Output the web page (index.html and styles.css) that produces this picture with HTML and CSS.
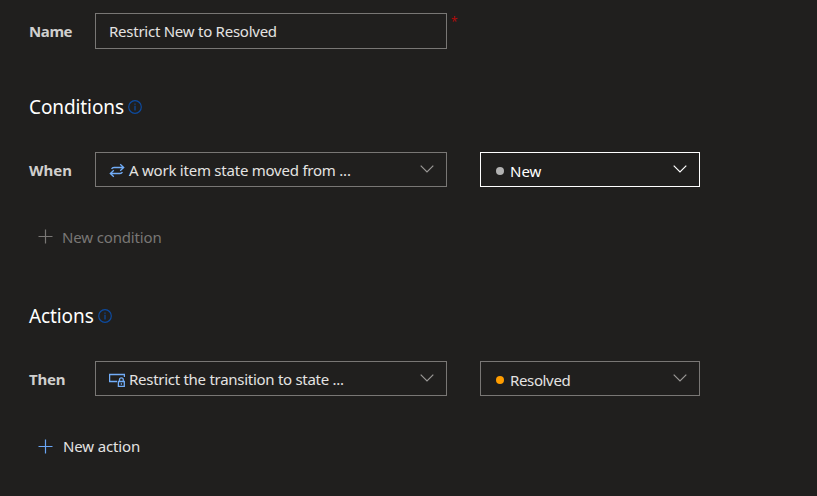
FILE: index.html
```
<!DOCTYPE html>
<html lang="en">
<head>
<meta charset="utf-8">
<title>Rule editor</title>
<link rel="stylesheet" href="styles.css">
</head>
<body>
<main class="rule">
  <div class="row name-row">
    <label class="label label-name">Name</label>
    <div class="field"><span class="value value-name">Restrict New to Resolved</span></div>
    <span class="required">*</span>
  </div>

  <h2 class="heading"><span>Conditions</span>
    <svg class="info" viewBox="0 0 14 14"><circle cx="7" cy="7" r="6.3"/><path d="M7 5.800v4.700M7 3.500v1.300"/></svg>
  </h2>
  <div class="row">
    <span class="label">When</span>
    <div class="select wide">
      <svg class="icon" viewBox="0 0 16 16"><path d="M2.600 7Q3.300 5.500 5 5.500H14.500M11.200 2.200l3.500 3.300-3.500 3.300M13.400 10Q12.700 11.500 11 11.500H1.500M4.800 8.200L1.300 11.500l3.500 3.300"/></svg>
      <span class="value value-when">A work item state moved from ...</span>
      <svg class="chevron" viewBox="0 0 14 8"><path d="M.7.7 7 7 13.300.7"/></svg>
    </div>
    <div class="select narrow active">
      <span class="dot"></span>
      <span class="value">New</span>
      <svg class="chevron" viewBox="0 0 14 8"><path d="M.7.7 7 7 13.300.7"/></svg>
    </div>
  </div>
  <div class="add disabled">
    <svg class="plus" viewBox="0 0 15 15"><path d="M7.500.5v14M.5 7.500h14"/></svg>
    <span class="add-condition">New condition</span>
  </div>

  <h2 class="heading heading-actions"><span>Actions</span>
    <svg class="info" viewBox="0 0 14 14"><circle cx="7" cy="7" r="6.3"/><path d="M7 5.800v4.700M7 3.500v1.300"/></svg>
  </h2>
  <div class="row">
    <span class="label label-then">Then</span>
    <div class="select wide">
      <svg class="icon" viewBox="0 0 16 16"><path d="M8 10.500H.6v-7h14.800V6M9.400 10.500h5.900v4.900H9.400zM10.500 10.500V8.700q0-1.900 1.900-1.900t1.900 1.900v1.800M12.400 12.200v1.500"/></svg>
      <span class="value value-then">Restrict the transition to state ...</span>
      <svg class="chevron" viewBox="0 0 14 8"><path d="M.7.7 7 7 13.300.7"/></svg>
    </div>
    <div class="select narrow">
      <span class="dot orange"></span>
      <span class="value value-resolved">Resolved</span>
      <svg class="chevron" viewBox="0 0 14 8"><path d="M.7.7 7 7 13.300.7"/></svg>
    </div>
  </div>
  <div class="add">
    <svg class="plus" viewBox="0 0 15 15"><path d="M7.500.5v14M.5 7.500h14"/></svg>
    <span class="add-action">New action</span>
  </div>
</main>
</body>
</html>
```
FILE: styles.css
```
* { box-sizing: border-box; }
body {
  margin: 0;
  background: #201f1e;
  color: #e4e3e2;
  font: 15px/20px "Noto Sans", sans-serif;
}
svg { display: block; flex: none; fill: none; stroke: currentColor; }
.rule { padding: 13px 0 0 29px; white-space: nowrap; }
.row { display: flex; align-items: center; height: 35px; }
.name-row { height: 36px; }
.label { width: 66px; font-weight: 700; color: #d0cfce; }
.label-name { letter-spacing: -.4px; }
.label-then { letter-spacing: -.2px; }
.field, .select {
  display: flex;
  align-items: center;
  height: 100%;
  border: 1px solid #797775;
  padding: 1px 12px 0 13px;
}
.field { width: 352px; padding-top: 0; }
.wide { width: 352px; }
.narrow { width: 220px; margin-left: 33px; padding: 3px 12px 0 15px; }
.active { border-color: #fff; color: #fff; }
.value-name { letter-spacing: -.25px; }
.value-when { letter-spacing: -.23px; }
.value-then { letter-spacing: -.28px; }
.value-resolved { letter-spacing: -.36px; }
.required {
  align-self: flex-start;
  margin: 1px 0 0 4px;
  color: #b00b0b;
  font-size: 12px;
  line-height: 16px;
}
.heading {
  display: flex;
  align-items: center;
  gap: 4px;
  height: 28px;
  margin: 44px 0 31px;
  color: #fff;
  font-size: 19px;
  font-weight: 400;
  line-height: 28px;
  letter-spacing: -.1px;
}
.info { width: 14px; height: 14px; color: #0d4ba0; stroke-width: 1.2; }
.icon { width: 16px; height: 16px; margin-right: 4px; color: #72adf8; stroke-width: 1.3; }
.chevron { width: 14px; height: 8px; margin: -2px 0 0 auto; color: #9a9896; stroke-width: 1.2; }
.narrow .chevron { margin-top: -4px; }
.active .chevron { color: #fff; }
.dot { width: 8px; height: 8px; margin: -1px 6px 0 0; border-radius: 50%; background: #b2b2b2; }
.orange { background: #ff9d00; }
.add {
  display: flex;
  align-items: center;
  gap: 10px;
  height: 20px;
  margin: 40px 0 0 9px;
}
.plus { width: 15px; height: 15px; color: #69a5f5; stroke-width: 1.2; }
.disabled { color: #797775; gap: 9px; }
.disabled .plus { color: #797775; margin-top: -2px; }
.add-condition { letter-spacing: -.15px; }
.add-action { letter-spacing: -.15px; }
.heading-actions { margin-top: 55px; }
```
